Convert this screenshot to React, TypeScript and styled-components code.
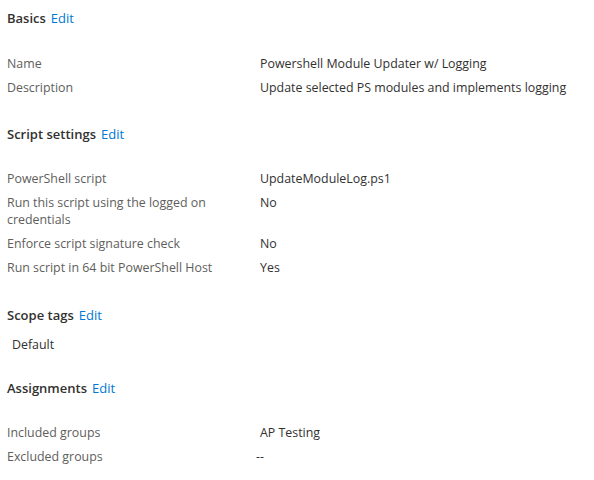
import styled, { createGlobalStyle } from "styled-components";

const GlobalStyle = createGlobalStyle`
    body {
        margin: 0;
        background: #fff;
        font-family: "Open Sans", "Noto Sans", sans-serif;
        font-size: 12.4px;
        color: #323130;
    }
`;

const Page = styled.div`
    padding: 9px 7px 0 7px;
    display: flex;
    flex-direction: column;
`;

const Section = styled.section<{ $gap?: number; $after?: number }>`
    display: flex;
    flex-direction: column;
    gap: ${(p) => p.$gap ?? 28}px;
    margin-bottom: ${(p) => p.$after ?? 29}px;
`;

const Heading = styled.h3`
    margin: 0;
    font-size: 13px;
    font-weight: 600;
    line-height: 18px;
    display: flex;
    gap: 5px;
`;

const EditLink = styled.a`
    color: #0078d4;
    font-weight: 400;
    text-decoration: none;
    cursor: pointer;
`;

const Rows = styled.div`
    display: grid;
    grid-template-columns: 253px 1fr;
    row-gap: 7px;
    line-height: 17px;
`;

const Label = styled.div`
    color: #605e5c;
    padding-right: 30px;
`;

const Value = styled.div<{ $shift?: number }>`
    color: #323130;
    margin-left: ${(p) => p.$shift ?? 0}px;
`;

const Tag = styled.div`
    padding-left: 5px;
    line-height: 17px;
`;

type Row = { label: string; value: string; shift?: number };

function DetailSection({
    title,
    rows,
    gap,
    after,
}: {
    title: string;
    rows: Row[];
    gap?: number;
    after?: number;
}) {
    return (
        <Section $gap={gap} $after={after}>
            <Heading>
                {title} <EditLink>Edit</EditLink>
            </Heading>
            <Rows>
                {rows.map((r) => (
                    <>
                        <Label key={r.label}>{r.label}</Label>
                        <Value $shift={r.shift}>{r.value}</Value>
                    </>
                ))}
            </Rows>
        </Section>
    );
}

export default function App() {
    return (
        <>
            <GlobalStyle />
            <Page>
                <DetailSection
                    title="Basics"
                    rows={[
                        { label: "Name", value: "Powershell Module Updater w/ Logging" },
                        {
                            label: "Description",
                            value: "Update selected PS modules and implements logging",
                        },
                    ]}
                />
                <DetailSection
                    title="Script settings"
                    gap={27}
                    after={30}
                    rows={[
                        { label: "PowerShell script", value: "UpdateModuleLog.ps1" },
                        {
                            label: "Run this script using the logged on credentials",
                            value: "No",
                        },
                        { label: "Enforce script signature check", value: "No" },
                        { label: "Run script in 64 bit PowerShell Host", value: "Yes" },
                    ]}
                />
                <Section $gap={12} $after={26}>
                    <Heading>
                        Scope tags <EditLink>Edit</EditLink>
                    </Heading>
                    <Tag>Default</Tag>
                </Section>
                <DetailSection
                    title="Assignments"
                    gap={27}
                    after={0}
                    rows={[
                        { label: "Included groups", value: "AP Testing" },
                        { label: "Excluded groups", value: "--", shift: -4 },
                    ]}
                />
            </Page>
        </>
    );
}
